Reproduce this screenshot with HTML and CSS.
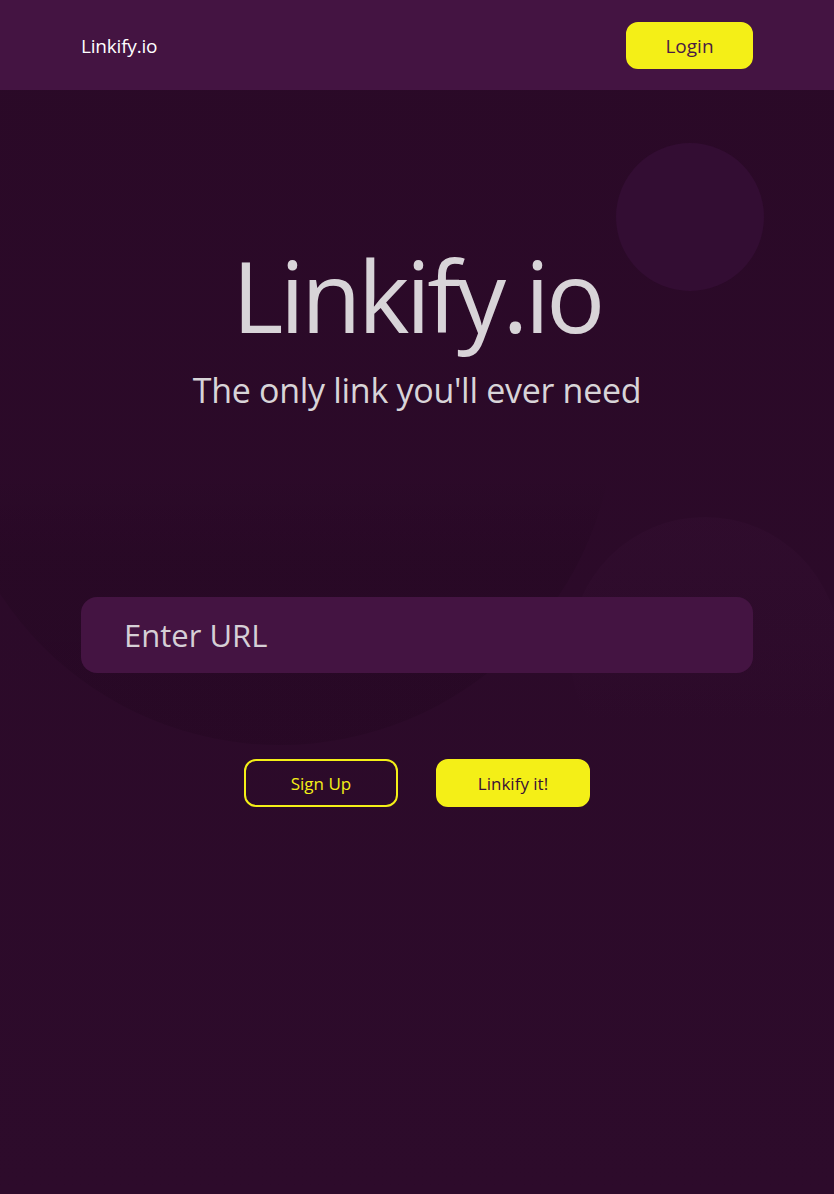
FILE: index.html
```html
<!DOCTYPE html>
<html lang="en">
<head>
<meta charset="utf-8">
<title>Linkify.io</title>
<link rel="stylesheet" href="styles.css">
</head>
<body>
<div class="decor" aria-hidden="true">
  <span class="blob blob-top"></span>
  <span class="blob blob-left"></span>
  <span class="blob blob-right"></span>
</div>
<header class="topbar">
  <a class="brand" href="#">Linkify.io</a>
  <button class="btn btn-login">Login</button>
</header>
<main class="page">
  <section class="hero">
    <h1 class="hero-title">Linkify.io</h1>
    <p class="hero-sub">The only link you'll ever need</p>
  </section>
  <form class="url-form" onsubmit="return false">
    <input class="url-input" type="text" placeholder="Enter URL">
    <div class="actions">
      <button type="button" class="btn btn-outline">Sign Up</button>
      <button type="submit" class="btn btn-solid">Linkify it!</button>
    </div>
  </form>
</main>
</body>
</html>
```
FILE: styles.css
```css
* { box-sizing: border-box; }
html, body { margin: 0; padding: 0; }
body {
  min-height: 1194px;
  background: linear-gradient(180deg, #2a0927 0%, #2d0b2b 100%);
  font-family: "Open Sans", "Noto Sans", sans-serif;
  color: #d8d3d8;
  position: relative;
  overflow: hidden;
}
.decor { position: absolute; inset: 0; z-index: 0; pointer-events: none; overflow: hidden; }
.blob { position: absolute; border-radius: 50%; display: block; }
.blob-top { left: 616px; top: 143px; width: 148px; height: 148px; background: #330d33; }
.blob-left {
  left: -55px; top: 75px; width: 670px; height: 670px;
  background: linear-gradient(180deg, rgba(20, 0, 18, 0) 60%, rgba(20, 0, 18, 0.14) 72%, rgba(20, 0, 18, 0.16) 100%);
}
.blob-right {
  left: 570px; top: 517px; width: 270px; height: 270px;
  background: linear-gradient(180deg, rgba(60, 20, 58, 0.22) 0%, rgba(60, 20, 58, 0.12) 45%, rgba(60, 20, 58, 0) 75%);
}

.topbar {
  position: relative; z-index: 1;
  height: 90px;
  background: #441442;
  display: flex;
  align-items: center;
  justify-content: space-between;
  padding: 0 81px;
}
.brand {
  color: #ffffff;
  text-decoration: none;
  font-size: 19px;
  letter-spacing: -0.2px;
  padding-top: 2px;
}
.btn {
  font-family: inherit;
  border-radius: 12px;
  cursor: pointer;
  border: 2px solid #f4ef17;
}
.btn-login {
  width: 127px; height: 47px;
  background: #f4ef17;
  color: #4a1a45;
  font-size: 19px;
  padding-top: 3px;
}
.page {
  position: relative; z-index: 1;
  width: 672px;
  margin: 0 auto;
}
.hero { text-align: center; padding-top: 156px; }
.hero-title {
  margin: 0;
  font-size: 98px;
  line-height: 1;
  font-weight: 400;
  letter-spacing: -3.4px;
  color: #d8d4d8;
}
.hero-sub {
  margin: 29px 0 0;
  font-size: 34px;
  line-height: 1;
  color: #d8d4d8;
  letter-spacing: -0.3px;
}
.url-form { margin-top: 190px; }
.url-input {
  display: block;
  width: 100%;
  height: 76px;
  border: none;
  outline: none;
  border-radius: 16px;
  background: #441442;
  padding: 0 43px;
  font-family: inherit;
  font-size: 31px;
  color: #ddd6dd;
}
.url-input::placeholder { color: #d6cfd6; opacity: 1; }
.actions {
  display: flex;
  justify-content: center;
  gap: 38px;
  margin-top: 86px;
}
.actions .btn { width: 154px; height: 48px; font-size: 17px; }
.btn-outline { background: transparent; color: #f4ef17; }
.btn-solid { background: #f4ef17; color: #3a0f36; }
```
